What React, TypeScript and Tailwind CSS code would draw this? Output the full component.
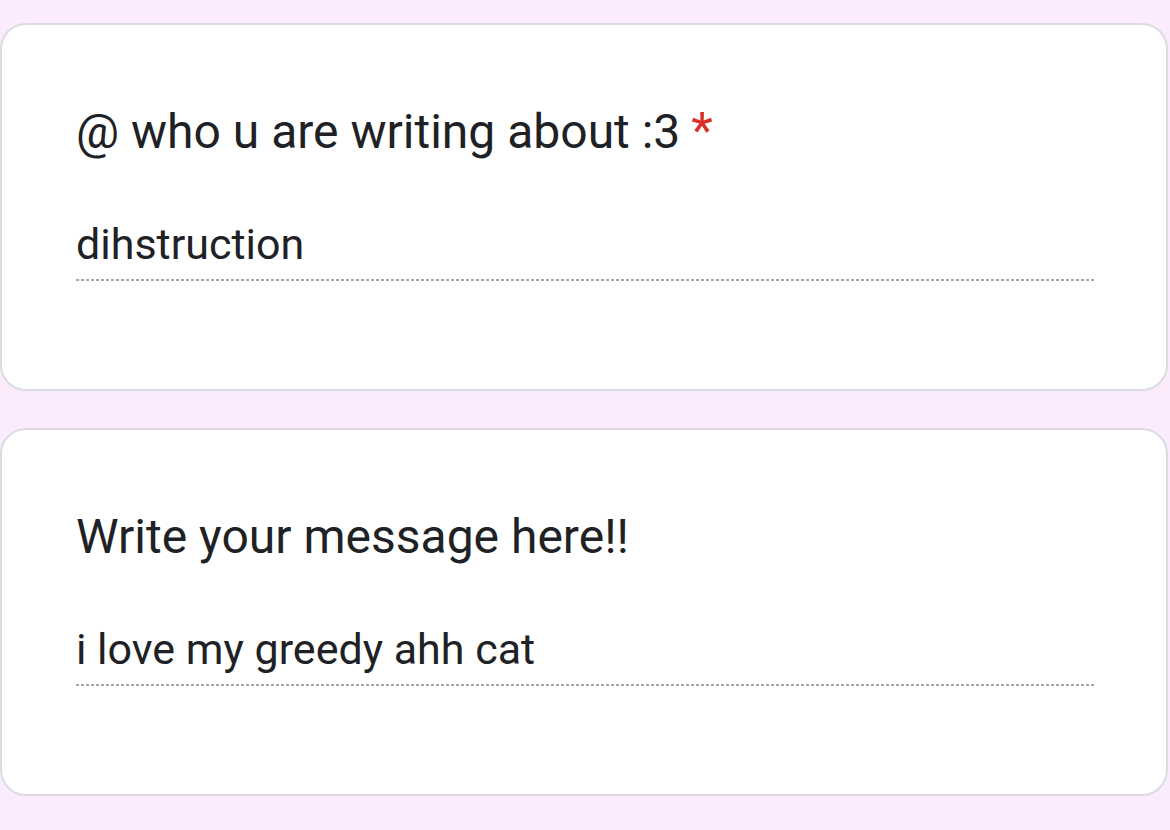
import React from "react";

function Card({ title, required, answer }: { title: string; required?: boolean; answer: string }) {
  return (
    <div className="bg-white border-2 border-[#dadce0] rounded-[26px] h-[368px] pl-[74px] pr-[72px] pt-[79px]">
      <div className="h-[56px] text-[48px] leading-[56px] text-[#202124] whitespace-nowrap">
        <span>{title}</span>
        {required && <span className="text-[#d93025] ml-[11px] text-[50px] leading-none">*</span>}
      </div>
      <div className="mt-[60px] text-[43px] leading-[48px] text-[#202124] whitespace-nowrap">{answer}</div>
      <div className="mt-[11px] h-[2px] bg-[repeating-linear-gradient(to_right,#a6a6a6_0_3px,transparent_3px_5px)]" />
    </div>
  );
}

export default function App() {
  return (
    <div
      className="w-[1170px] h-[830px] bg-[#fcebfc] overflow-hidden pt-[23px] pr-[2px] flex flex-col gap-[37px]"
      style={{ fontFamily: "Roboto, 'Liberation Sans', sans-serif" }}
    >
      <Card title="@ who u are writing about :3" required answer="dihstruction" />
      <Card title="Write your message here!!" answer="i love my greedy ahh cat" />
    </div>
  );
}
